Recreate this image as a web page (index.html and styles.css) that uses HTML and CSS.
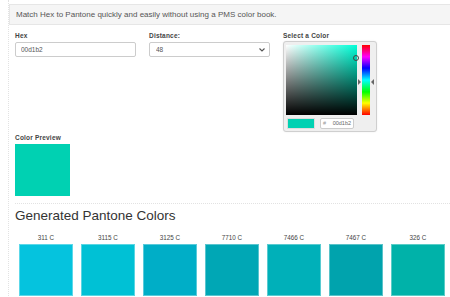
FILE: index.html
```html
<!DOCTYPE html>
<html lang="en">
<head>
    <meta charset="UTF-8">
    <meta name="viewport" content="width=device-width, initial-scale=1.0">
    <title>Hex to Pantone</title>
    <link rel="stylesheet" href="styles.css">
</head>
<body>
    <div class="page">
        <div class="intro">Match Hex to Pantone quickly and easily without using a PMS color book.</div>
        <div class="content">
            <div class="form-row">
                <div class="field">
                    <label for="hex">Hex</label>
                    <input type="text" id="hex" value="00d1b2">
                </div>
                <div class="field">
                    <label for="distance">Distance:</label>
                    <div class="select-wrap">
                        <select id="distance">
                            <option>48</option>
                        </select>
                        <svg class="chevron" width="6" height="4" viewBox="0 0 6 4"><path d="M0.5 0.5 L3 3 L5.5 0.5" fill="none" stroke="#555" stroke-width="1.1"/></svg>
                    </div>
                </div>
                <div class="field">
                    <label>Select a Color</label>
                    <div class="picker">
                        <div class="picker-top">
                            <div class="sv"><span class="sv-cursor"></span></div>
                            <div class="hue-wrap">
                                <div class="hue"></div>
                                <span class="arrow arrow-left"></span>
                                <span class="arrow arrow-right"></span>
                            </div>
                        </div>
                        <div class="picker-bottom">
                            <div class="picker-swatch"></div>
                            <div class="picker-hex"><span class="hash">#</span><span>00d1b2</span></div>
                        </div>
                    </div>
                </div>
            </div>

            <div class="preview">
                <label>Color Preview</label>
                <div class="preview-box"></div>
            </div>

            <div class="results">
                <h2>Generated Pantone Colors</h2>
                <div class="swatches">
                    <div class="swatch">
                        <div class="swatch-name">311 C</div>
                        <div class="swatch-block" style="background-color: #05c3de;"></div>
                        <div class="swatch-hex">#05C3DE</div>
                    </div>
                    <div class="swatch">
                        <div class="swatch-name">3115 C</div>
                        <div class="swatch-block" style="background-color: #00c1d5;"></div>
                        <div class="swatch-hex">#00C1D5</div>
                    </div>
                    <div class="swatch">
                        <div class="swatch-name">3125 C</div>
                        <div class="swatch-block" style="background-color: #00aec7;"></div>
                        <div class="swatch-hex">#00AEC7</div>
                    </div>
                    <div class="swatch">
                        <div class="swatch-name">7710 C</div>
                        <div class="swatch-block" style="background-color: #00a7b5;"></div>
                        <div class="swatch-hex">#00A7B5</div>
                    </div>
                    <div class="swatch">
                        <div class="swatch-name">7466 C</div>
                        <div class="swatch-block" style="background-color: #00b0b9;"></div>
                        <div class="swatch-hex">#00B0B9</div>
                    </div>
                    <div class="swatch">
                        <div class="swatch-name">7467 C</div>
                        <div class="swatch-block" style="background-color: #00a3ad;"></div>
                        <div class="swatch-hex">#00A3AD</div>
                    </div>
                    <div class="swatch">
                        <div class="swatch-name">326 C</div>
                        <div class="swatch-block" style="background-color: #00b2a9;"></div>
                        <div class="swatch-hex">#00B2A9</div>
                    </div>
                </div>
            </div>
        </div>
    </div>
</body>
</html>
```

FILE: styles.css
```css
body {
    font-family: "Liberation Sans", Arial, sans-serif;
    margin: 0;
    padding: 0;
    background-color: #fff;
    color: #333;
    overflow: hidden;
}
.page {
    margin-left: 8px;
    padding-top: 4px;
    border-left: 1px dotted #e2e2e2;
    min-height: 297px;
    box-sizing: border-box;
}
.intro {
    height: 21px;
    box-sizing: border-box;
    padding-left: 6px;
    font-size: 8px;
    line-height: 19px;
    color: #555;
    background-color: #f5f5f5;
    border: 1px solid #e6e6e6;
    border-right: none;
    white-space: nowrap;
}
.content {
    padding-left: 6px;
}
.form-row {
    display: grid;
    grid-template-columns: 121px 121px 94px;
    column-gap: 13px;
    margin-top: 6px;
}
label {
    display: block;
    font-size: 6.5px;
    font-weight: bold;
    line-height: 9px;
    color: #444;
    letter-spacing: 0.2px;
    margin-bottom: 2px;
}
input, select {
    display: block;
    width: 100%;
    height: 15px;
    box-sizing: border-box;
    border: 1px solid #ccc;
    border-radius: 2px;
    background-color: #fff;
    font-family: "Liberation Sans", Arial, sans-serif;
    font-size: 6.5px;
    color: #555;
    margin: 0;
}
input {
    padding: 0 5px;
}
select {
    padding: 0 6px;
    appearance: none;
    -webkit-appearance: none;
}
.select-wrap {
    position: relative;
}
.chevron {
    position: absolute;
    right: 5px;
    top: 6px;
}
.picker {
    width: 94px;
    height: 91px;
    box-sizing: border-box;
    margin-top: -1px;
    padding: 3px 1px 0 2px;
    background-color: #efefef;
    border: 1px solid #cfcfcf;
    border-radius: 3px;
    box-shadow: 0 0 2px rgba(0, 0, 0, 0.08);
}
.picker-top {
    display: flex;
    height: 70px;
}
.sv {
    position: relative;
    width: 71px;
    height: 70px;
    background: linear-gradient(to top, #000, rgba(0, 0, 0, 0)),
                linear-gradient(to right, #fff, #00ffd8);
}
.sv-cursor {
    position: absolute;
    left: 67px;
    top: 10px;
    width: 4px;
    height: 4px;
    border: 1px solid #444;
    border-radius: 50%;
}
.hue-wrap {
    position: relative;
    width: 17px;
    margin-left: 1px;
    padding-left: 4px;
    box-sizing: border-box;
}
.hue {
    width: 8px;
    height: 70px;
    background: linear-gradient(to bottom, #f00 0%, #f0f 17%, #00f 33%, #0ff 50%, #0f0 67%, #ff0 83%, #f00 100%);
}
.arrow {
    position: absolute;
    top: 34px;
    width: 0;
    height: 0;
    border-top: 3px solid transparent;
    border-bottom: 3px solid transparent;
}
.arrow-left {
    left: 0;
    border-left: 3px solid #666;
}
.arrow-right {
    left: 13px;
    border-right: 3px solid #666;
}
.picker-bottom {
    display: flex;
    margin-top: 3px;
    height: 11px;
}
.picker-swatch {
    width: 28px;
    margin-left: 1px;
    background-color: #00d1b2;
    border: 1px solid #ddd;
    box-sizing: border-box;
}
.picker-hex {
    display: flex;
    justify-content: space-between;
    width: 34px;
    margin-left: 5px;
    padding: 0 2px 0 2px;
    box-sizing: border-box;
    font-size: 5.5px;
    line-height: 9px;
    color: #666;
    background-color: #fff;
    border: 1px solid #ccc;
    border-radius: 2px;
}
.hash {
    color: #999;
}
.preview {
    margin-top: 1px;
}
.preview-box {
    width: 55px;
    height: 52px;
    background-color: #00d1b2;
    margin-top: 2px;
}
.results {
    margin-top: 7px;
    border-top: 1px dotted #e2e2e2;
}
.results h2 {
    margin: 0;
    padding-top: 4px;
    font-size: 13.5px;
    font-weight: normal;
    line-height: 16px;
    color: #333;
}
.swatches {
    display: grid;
    grid-template-columns: repeat(7, 62px);
    margin-top: 10px;
}
.swatch {
    text-align: center;
}
.swatch-name {
    font-size: 6.3px;
    line-height: 8px;
    color: #444;
    margin-bottom: 2px;
}
.swatch-block {
    width: 54px;
    height: 52px;
    margin: 0 auto;
    box-sizing: border-box;
    border: 1px solid rgba(255, 255, 255, 0.35);
}
.swatch-hex {
    font-size: 6.3px;
    line-height: 8px;
    color: #333;
}
```
